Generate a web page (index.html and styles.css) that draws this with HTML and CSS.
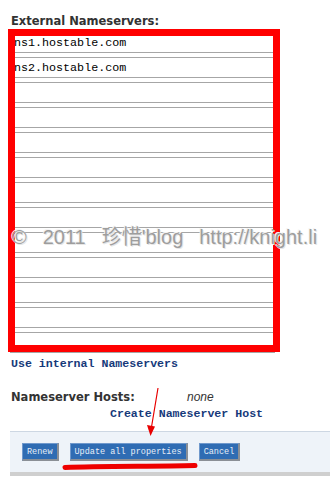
FILE: index.html
```html
<!DOCTYPE html>
<html>
<head>
<meta charset="utf-8">
<link rel="stylesheet" href="styles.css">
</head>
<body>
<div class="page">
  <h3 class="title">External Nameservers:</h3>
  <div class="ns-list">
    <input class="ns-input" type="text" value="ns1.hostable.com">
    <input class="ns-input" type="text" value="ns2.hostable.com">
    <input class="ns-input" type="text" value="">
    <input class="ns-input" type="text" value="">
    <input class="ns-input" type="text" value="">
    <input class="ns-input" type="text" value="">
    <input class="ns-input" type="text" value="">
    <input class="ns-input" type="text" value="">
    <input class="ns-input" type="text" value="">
    <input class="ns-input" type="text" value="">
    <input class="ns-input" type="text" value="">
    <input class="ns-input" type="text" value="">
    <input class="ns-input" type="text" value="">
  </div>
  <a class="link use-internal">Use internal Nameservers</a>
  <div class="hosts-row">
    <span class="hosts-label">Nameserver Hosts:</span>
    <span class="hosts-none">none</span>
  </div>
  <a class="link create-host">Create Nameserver Host</a>
  <div class="actions">
    <button class="btn">Renew</button>
    <button class="btn">Update all properties</button>
    <button class="btn">Cancel</button>
  </div>

  <div class="highlight-box"></div>
  <div class="watermark">© 2011 珍惜'blog http://knight.li</div>
  <svg class="annot" width="330" height="479" viewBox="0 0 330 479">
    <path d="M158 388 L151.5 427" stroke="#e80000" stroke-width="1.2" fill="none"/>
    <polygon points="147,425 155,426.5 150.5,436" fill="#e80000"/>
    <path d="M65 467.5 C100 466, 150 466.5, 195 465.5" stroke="#ee0000" stroke-width="5" stroke-linecap="round" fill="none"/>
  </svg>
</div>
</body>
</html>
```
FILE: styles.css
```css
html, body {
  margin: 0;
  padding: 0;
  background: #fff;
}

.page {
  position: relative;
  width: 330px;
  height: 479px;
  overflow: hidden;
}

.title {
  margin: 0;
  padding: 14px 0 0 11px;
  font: bold 11.5px/14px "DejaVu Sans", sans-serif;
  color: #333;
}

.ns-list {
  margin: 4px 0 0 10px;
  width: 265px;
  display: flex;
  flex-direction: column;
  gap: 4px;
}

.ns-input {
  display: block;
  box-sizing: border-box;
  width: 100%;
  height: 21px;
  margin: 0;
  padding: 0 0 0 4px;
  border: 0;
  border-top: 1px solid #a6a6a6;
  border-bottom: 1px solid #a6a6a6;
  background: #fff;
  font: 11.7px "Liberation Mono", monospace;
  color: #000;
  outline: none;
}

.link {
  display: block;
  font: bold 11.6px/14px "Liberation Mono", monospace;
  color: #16397a;
  text-decoration: none;
}

.use-internal {
  margin-top: 4px;
  padding-left: 11px;
}

.hosts-row {
  display: flex;
  align-items: baseline;
  margin-top: 19px;
  padding-left: 11px;
  line-height: 14px;
}

.hosts-label {
  width: 176px;
  font: bold 11.5px/14px "DejaVu Sans", sans-serif;
  color: #333;
}

.hosts-none {
  font: italic 12px/14px "Liberation Sans", sans-serif;
  color: #333;
}

.create-host {
  margin-top: 3px;
  padding-left: 110px;
}

.actions {
  margin: 10px 0 0 10px;
  padding: 11px 12px 11px;
  display: flex;
  gap: 11px;
  background: #eef3f9;
  border-top: 1px solid #cdd7e3;
  border-bottom: 4px solid #cfcfcf;
}

.btn {
  box-sizing: border-box;
  height: 18px;
  margin: 0;
  padding: 0 4px;
  font: 8.5px "Liberation Mono", monospace;
  color: #e6eef8;
  background: #2f6cb3;
  border-style: solid;
  border-width: 1px 2px 2px 1px;
  border-color: #6f98cc #8a8f96 #8a8f96 #6f98cc;
  cursor: pointer;
}

.highlight-box {
  position: absolute;
  left: 8px;
  top: 29px;
  width: 272px;
  height: 323px;
  box-sizing: border-box;
  border: 7px solid #ff0000;
}

.watermark {
  position: absolute;
  left: 12px;
  top: 227px;
  font: 20px/20px "Liberation Sans", "Noto Sans CJK SC", sans-serif;
  word-spacing: 10.4px;
  white-space: nowrap;
  color: #9d9d9d;
  text-shadow: 1px 1px 0 #e6e6e6, -1px -1px 0 #f4f4f4;
}

.annot {
  position: absolute;
  left: 0;
  top: 0;
  pointer-events: none;
}
```
